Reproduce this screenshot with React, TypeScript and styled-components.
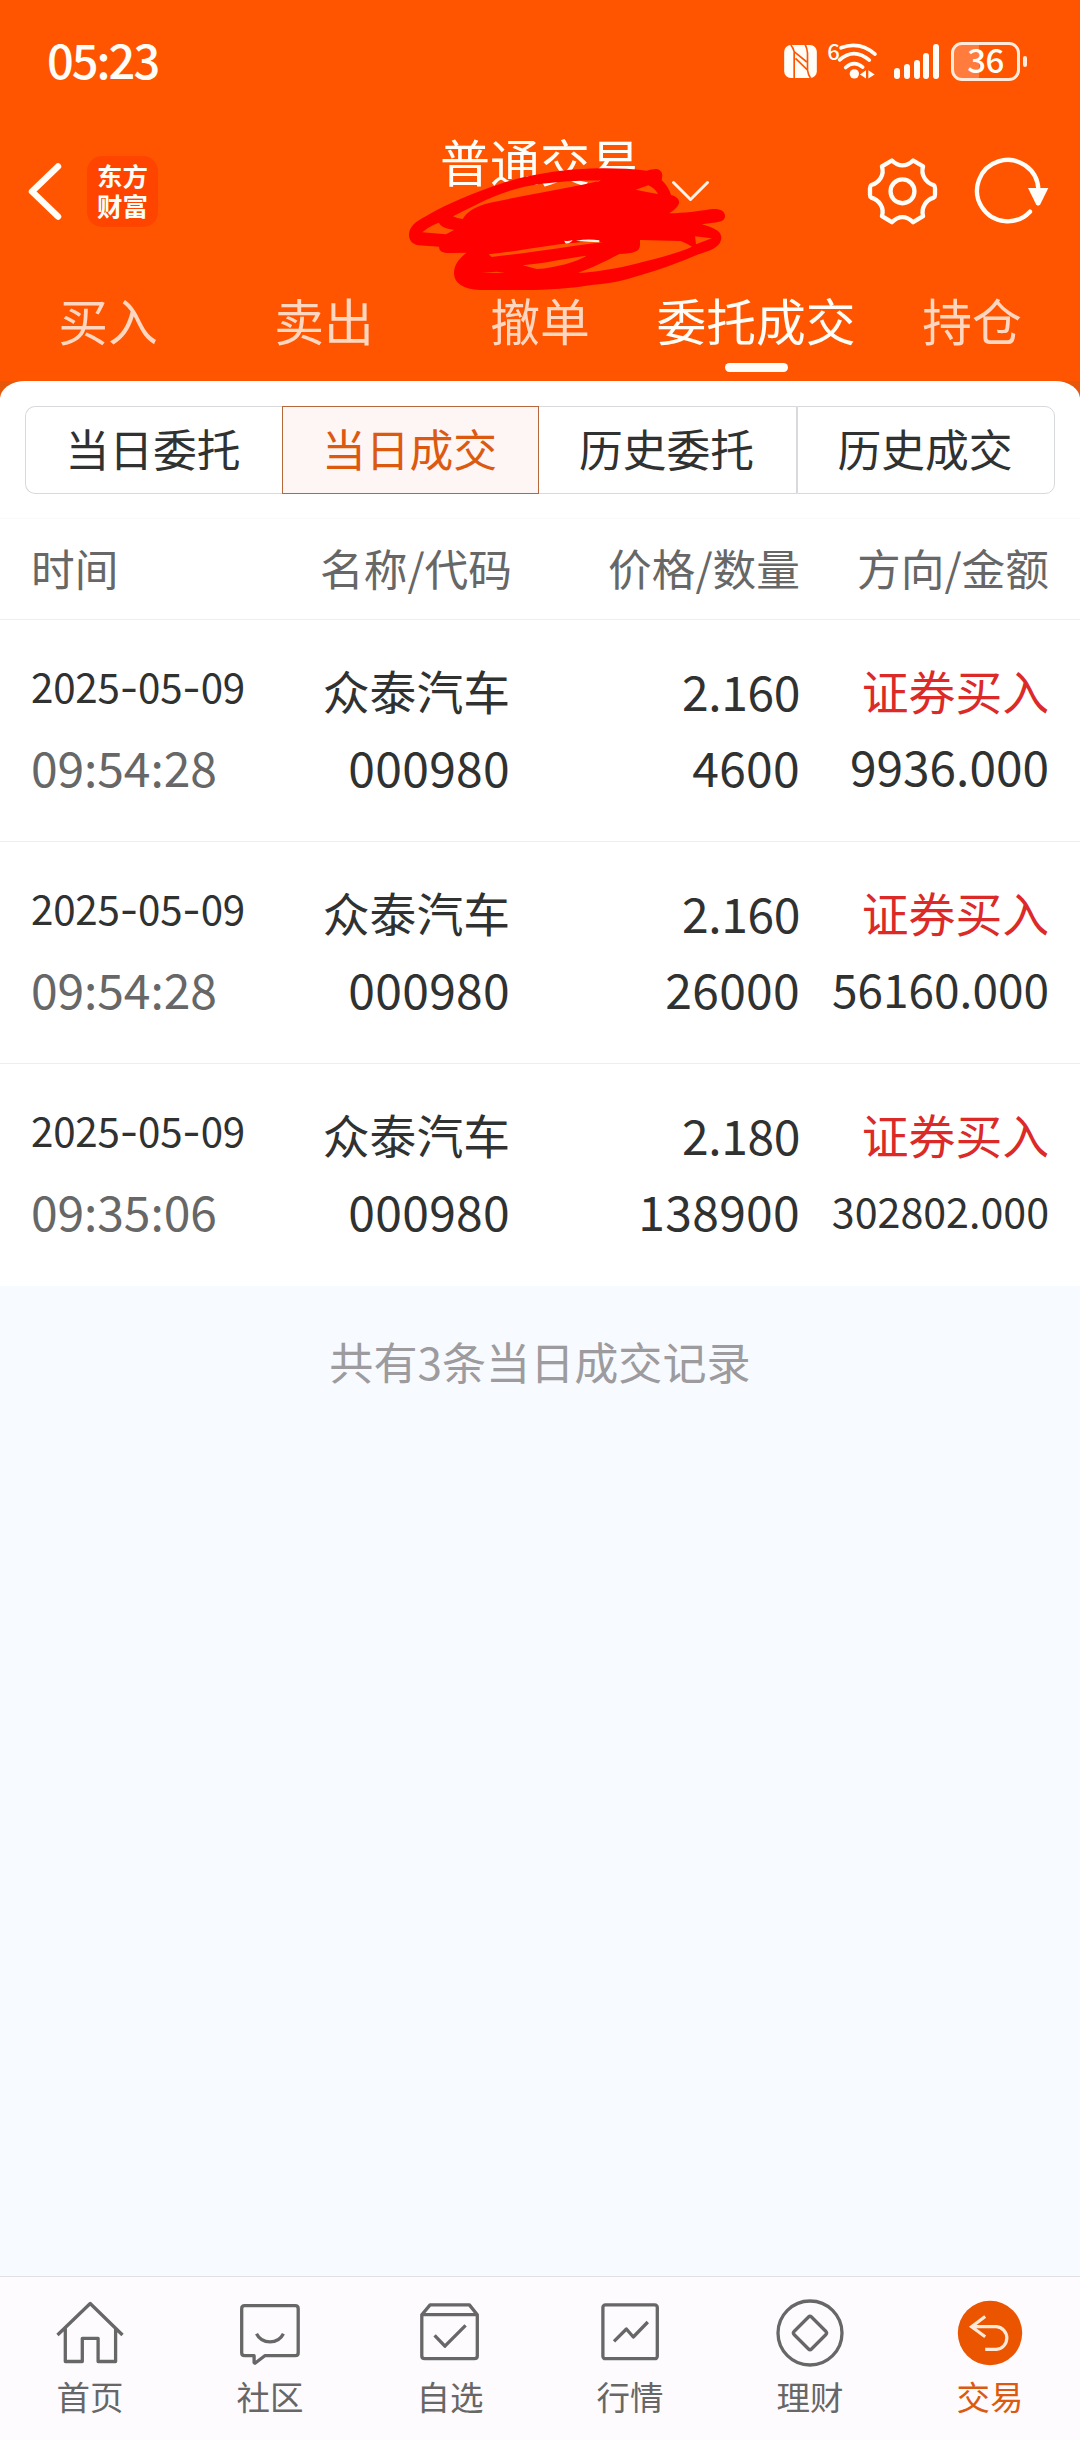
import React from 'react';
import styled, { createGlobalStyle } from 'styled-components';

const GlobalStyle = createGlobalStyle`
  *, *::before, *::after { box-sizing: border-box; }
  html, body { margin: 0; padding: 0; background: #f7faff; }
  body { font-family: 'Noto Sans CJK SC', 'Noto Sans', sans-serif; color: #303131; }
  svg { display: block; flex: none; overflow: visible; }
`;

const Screen = styled.div`
  width: 1080px;
  height: 2440px;
  display: flex;
  flex-direction: column;
  background: #f7faff;
`;

const Header = styled.header`
  position: relative;
  height: 381px;
  background: #ff5500;
  color: #fffdf8;
`;

const StatusBar = styled.div`
  display: flex;
  align-items: center;
  justify-content: space-between;
  height: 122px;
  padding: 0 53px 0 47px;
`;

const Clock = styled.div`
  font-size: 47px;
  font-weight: 500;
  line-height: 60px;
  letter-spacing: -2px;
  padding-bottom: 5px;
`;

const StatusIcons = styled.div`
  display: flex;
  align-items: center;
`;

const WifiGroup = styled.div`
  display: flex;
  align-items: flex-start;
  margin-left: 10px;
`;

const WifiGen = styled.span`
  width: 11px;
  font-size: 22px;
  font-weight: 500;
  line-height: 20px;
  margin-top: -3px;
`;

const SignalBars = styled.div`
  display: flex;
  align-items: flex-end;
  gap: 3.7px;
  height: 36px;
  margin: 0 12px 0 17px;
`;

const Bar = styled.i<{ $h: number }>`
  width: 6px;
  height: ${(p) => p.$h}px;
  border-radius: 3px;
  background: #fffdf8;
`;

const Battery = styled.div`
  display: flex;
  align-items: center;
  justify-content: center;
  width: 69px;
  height: 39px;
  border: 3px solid #ffeadb;
  border-radius: 11px;
  background: linear-gradient(to right, #ff7c3c 25px, transparent 25px);
  font-size: 33px;
  font-weight: 500;
  line-height: 33px;
  letter-spacing: -0.6px;
  padding-bottom: 4px;
`;

const BatteryTip = styled.i`
  width: 4px;
  height: 11px;
  margin-left: 3px;
  border-radius: 2px;
  background: #ffeadb;
`;

const NavRow = styled.div`
  display: grid;
  grid-template-columns: 440px 200px 440px;
  height: 138px;
`;

const NavLeft = styled.div`
  display: flex;
  align-items: center;
  gap: 26px;
  padding-left: 28px;
`;

const Logo = styled.div`
  width: 71px;
  height: 71px;
  padding: 4px 9px 0 10px;
  border-radius: 15px;
  background: #ff4400;
  font-size: 25.5px;
  font-weight: 700;
  line-height: 30px;
  word-break: break-all;
`;

const Title = styled.h1`
  margin: 8px 0 0;
  font-size: 50px;
  font-weight: 400;
  line-height: 60px;
  white-space: nowrap;
`;

const NavRight = styled.div`
  display: flex;
  align-items: center;
  padding: 0 32px 0 32px;
`;

const NavActions = styled.div`
  display: flex;
  align-items: center;
  gap: 38px;
  margin-left: auto;
`;

const Scribble = styled.svg`
  position: absolute;
  left: 390px;
  top: 120px;
  width: 350px;
  height: 180px;
`;

const Tabs = styled.nav`
  display: grid;
  grid-template-columns: repeat(5, 216px);
  height: 121px;
  padding-top: 29px;
`;

const Tab = styled.div<{ $active?: boolean }>`
  display: flex;
  flex-direction: column;
  align-items: center;
  gap: 14px;
  font-size: 49.8px;
  line-height: 60px;
  white-space: nowrap;
  color: ${(p) => (p.$active ? '#fffdf8' : '#ffd6bf')};

  &::after {
    content: '';
    width: 63px;
    height: 9px;
    border-radius: 5px;
    background: ${(p) => (p.$active ? '#fffdf8' : 'transparent')};
  }
`;

const PanelBack = styled.div`
  background: linear-gradient(#e6570c 16px, #fff 16px);
`;

const Panel = styled.main`
  background: #fff;
  border-radius: 25px 25px 0 0 / 18px 18px 0 0;
  padding-top: 25px;
`;

const Segments = styled.div`
  display: grid;
  grid-template-columns: 257px 257px 258px 258px;
  height: 88px;
  margin: 0 25px 24px;
`;

const Segment = styled.div<{ $active?: boolean }>`
  display: flex;
  align-items: center;
  justify-content: center;
  padding: 0 2px 4px 0;
  font-size: 43.8px;
  color: ${(p) => (p.$active ? '#dc5a10' : '#303131')};
  background: ${(p) => (p.$active ? '#fef5f5' : '#fff')};
  border: 1px solid ${(p) => (p.$active ? '#b4683c' : '#d8d9dc')};

  &:first-child { border-radius: 10px 0 0 10px; border-right: 0; }
  &:nth-child(3) { border-left: 0; }
  &:last-child { border-radius: 0 10px 10px 0; }
`;

const Row = styled.div`
  display: grid;
  grid-template-columns: 228px 250px 290px 249px;
  padding: 0 31px 0 32px;
`;

const HeadRow = styled(Row)`
  height: 102px;
  align-items: center;
  border-top: 1px solid #fafafa;
  border-bottom: 1px solid #eeeeee;
  padding-bottom: 5px;
  font-size: 43.7px;
  color: #666766;
`;

const HeadCell = styled.div<{ $left?: boolean; $shift?: number }>`
  text-align: ${(p) => (p.$left ? 'left' : 'right')};
  margin-right: ${(p) => -(p.$shift ?? 0)}px;
  margin-left: ${(p) => (p.$left ? -1 : 0)}px;
  white-space: nowrap;
`;

const TradeRow = styled(Row)`
  height: 222px;
  padding-top: 32px;
  border-bottom: 1px solid #eeeeee;

  &:last-child { border-bottom-color: #fff; }
`;

const TimeCell = styled.div`
  display: flex;
  flex-direction: column;
  margin-left: -1px;
  white-space: nowrap;
`;

const DateText = styled.div`
  height: 76px;
  font-size: 40.3px;
  line-height: 67px;
  letter-spacing: -0.2px;
`;

const Dash = styled.span`
  font-family: Inter, sans-serif;
  line-height: 1;
`;

const TimeText = styled.div`
  font-size: 48px;
  line-height: 76px;
  letter-spacing: -0.1px;
  color: #666766;
`;

const ValueCell = styled.div`
  text-align: right;
  white-space: nowrap;
`;

const Value = styled.div<{ $size?: number; $color?: string; $track?: number }>`
  height: 76px;
  line-height: 76px;
  font-size: ${(p) => p.$size ?? 48}px;
  color: ${(p) => p.$color ?? 'inherit'};
  letter-spacing: ${(p) => p.$track ?? 0}px;
`;

const Summary = styled.p`
  flex: 1;
  margin: 0;
  padding-top: 43px;
  text-align: center;
  font-size: 44.1px;
  line-height: 64px;
  color: #9d9b9d;
`;

const BottomNav = styled.nav`
  display: grid;
  grid-template-columns: repeat(6, 180px);
  height: 164px;
  padding-top: 19px;
  background: #fefbff;
  border-top: 1px solid #dfe1e5;
`;

const NavItem = styled.div<{ $active?: boolean }>`
  display: flex;
  flex-direction: column;
  align-items: center;
  font-size: 33.5px;
  line-height: 40px;
  color: ${(p) => (p.$active ? '#dc5a10' : '#666766')};

  svg { margin-bottom: 8px; }
`;

const NfcIcon = () => (
  <svg width="33" height="33" viewBox="133 72 98 99" fill="none" stroke="#ff5500" strokeWidth="5">
    <rect x="133" y="72" width="98" height="99" rx="20" fill="#fffdf8" stroke="none" />
    <path d="M163 172 V92 L201 123 M153 72 Q160 80 163 92" />
    <path d="M167 112 L203 147 V96 Q202 82 196 71 M203 147 Q205 162 212 171" />
  </svg>
);

const WifiIcon = () => (
  <svg width="39" height="36" viewBox="294 68 117 107" fill="none" stroke="#fffdf8" strokeWidth="11" strokeLinecap="round">
    <path d="M303 82 Q359 61 405 101" />
    <path d="M299 118 Q342 80 388 119" />
    <path d="M317 141 Q342 118 368 140" />
    <circle cx="343" cy="160" r="14" fill="#fffdf8" stroke="none" />
    <path d="M378 149 V174 L360 162Z M385 149 V174 L404 162Z" fill="#fffdf8" stroke="none" />
  </svg>
);

const BackIcon = () => (
  <svg width="33" height="57" viewBox="0 0 33 57" fill="none" stroke="#fffdf8" strokeWidth="6.5" strokeLinecap="round" strokeLinejoin="round">
    <path d="M30 3.5 L4 28.5 L30 53.5" />
  </svg>
);

const ChevronIcon = () => (
  <svg width="37" height="20" viewBox="0 0 37 20" fill="none" stroke="#fff1e6" strokeWidth="3" strokeLinecap="round" strokeLinejoin="round">
    <path d="M1.5 1.5 L18.5 18.5 L35.5 1.5" />
  </svg>
);

const GearIcon = () => (
  <svg width="69" height="67" viewBox="385 411 208 201" fill="none" stroke="#fffdf8" strokeWidth="13" strokeLinejoin="round">
    <path d="M457 418 Q473 433 489 433 Q505 433 521 418 L551 436 Q545 456 556 472 Q566 488 583 492 Q587 495 587 502 V521 Q587 528 583 530 Q564 536 556 551 Q546 567 551 586 L521 604 Q505 589 489 589 Q473 589 457 604 L427 586 Q433 567 423 551 Q413 535 395 530 Q391 528 391 521 V502 Q391 495 395 492 Q413 487 423 471 Q433 456 427 436 Z" />
    <circle cx="489" cy="511" r="36" />
  </svg>
);

const RefreshIcon = () => (
  <svg width="73" height="66" viewBox="707 415 219 198" fill="none" stroke="#fffdf8" strokeWidth="13">
    <path d="M897 508 A92 92 0 1 0 872 576" strokeLinecap="round" />
    <path d="M866 505 H927 L903 554 Q896 562 890 554Z" fill="#fffdf8" stroke="none" />
  </svg>
);

const ScribbleMark = () => (
  <Scribble viewBox="0 0 1050 540">
    <path
      fill="#ff0000"
      fillRule="evenodd"
      d="M57 345 C57 320 75 305 110 287 C170 252 260 215 330 192 C400 168 480 155 560 148 C620 143 700 143 770 152 C785 148 800 144 808 150 C820 158 817 170 815 180 C830 195 840 212 843 225 C862 230 869 240 867 250 C862 265 845 275 838 280 C880 280 930 273 960 268 C985 264 1005 270 1005 288 C1005 303 990 306 970 308 L935 313 C965 322 993 330 994 352 C994 385 950 395 920 405 C860 430 820 445 780 457 C720 475 680 490 610 494 C540 505 480 510 400 510 L270 510 C220 508 192 490 192 460 C192 430 212 412 230 398 L185 399 C160 400 147 395 147 380 L85 376 C65 372 57 360 57 345Z
      M189 289 C250 258 330 213 420 197 C480 187 560 180 632 182 C560 198 480 212 400 228 L300 248 C260 258 232 272 218 297 Q200 295 189 289Z
      M97 337 C110 325 130 313 147 308 C152 320 165 324 192 330 Q180 336 168 343Z
      M737 209 L775 196 Q796 206 804 222 Q770 216 737 209Z
      M750 360 L872 363 Q890 370 906 380 C860 400 800 417 700 440 C650 450 600 458 565 458 C600 445 640 428 688 402 C730 400 750 396 750 375Z
      M296 403 C400 392 500 368 600 365 L640 367 C560 375 450 395 305 411Z
      M398 436 C470 428 530 415 590 407 C560 425 500 443 440 447Z
      M275 458 L320 455 L345 459Z
      M915 349 L965 355 L918 373Z"
    />
    <path d="M523 362 Q536 364 548 360 Q540 372 526 370Z M558 362 Q595 355 628 361 V367 Q590 365 570 364Z" fill="#fff3e8" />
  </Scribble>
);

const LineIcon = ({ children }: { children: React.ReactNode }) => (
  <svg width="72" height="72" viewBox="0 0 72 72" fill="none" stroke="#666766" strokeWidth="3.3" strokeLinejoin="round">
    {children}
  </svg>
);

const navItems = [
  {
    label: '首页',
    icon: (
      <LineIcon>
        <path d="M3.5 39 L36.2 7.5 L68.5 39 M11.3 32 V65.5 H28.3 V42.3 H44.1 V65.5 H61.6 V32" />
      </LineIcon>
    ),
  },
  {
    label: '社区',
    icon: (
      <LineIcon>
        <path d="M10.7 9.7 H61.2 Q64.2 9.7 64.2 12.7 V56.7 Q64.2 59.7 61.2 59.7 H30.8 L21 67.3 L20.1 66.5 V59.7 H10.7 Q7.7 59.7 7.7 56.7 V12.7 Q7.7 9.7 10.7 9.7Z" />
        <path d="M22.5 37.7 C28 48.5 44 48.5 49.4 37.7" />
      </LineIcon>
    ),
  },
  {
    label: '自选',
    icon: (
      <LineIcon>
        <path d="M16.1 8.9 H55.4 L63.3 18.7 V60 Q63.3 62.7 60.3 62.7 H10.8 Q7.8 62.7 7.8 60 V18.7Z M7.8 18.7 H63.3" />
        <path d="M20.6 39.3 L30.9 50.2 L51.6 29.3" />
      </LineIcon>
    ),
  },
  {
    label: '行情',
    icon: (
      <LineIcon>
        <rect x="8.9" y="8.9" width="54.4" height="53.8" rx="2.5" />
        <path d="M20 45.3 L32.4 33 L39.3 41 L53.8 26" />
      </LineIcon>
    ),
  },
  {
    label: '理财',
    icon: (
      <LineIcon>
        <circle cx="36" cy="37" r="32" />
        <path d="M34.5 21 Q36 19.5 37.5 21 L52 35.5 Q53.3 37 52 38.5 L37.5 53 Q36 54.5 34.5 53 L20 38.5 Q18.7 37 20 35.5Z" />
      </LineIcon>
    ),
  },
  {
    label: '交易',
    active: true,
    icon: (
      <svg width="72" height="72" viewBox="0 0 72 72" fill="none" stroke="#ffe9d6" strokeWidth="3.2">
        <circle cx="36" cy="37" r="32.2" fill="#eb5500" stroke="none" />
        <path d="M31.2 20.5 L17.6 30.7 L31.2 40.7 M17.6 30.7 H42.5 A11.4 11.4 0 0 1 42.5 53.4 H31.2" />
      </svg>
    ),
  },
];

const tabs = ['买入', '卖出', '撤单', '委托成交', '持仓'];
const segments = ['当日委托', '当日成交', '历史委托', '历史成交'];

const trades = [
  { time: '09:54:28', price: '2.160', qty: '4600', amount: '9936.000', size: 47.8 },
  { time: '09:54:28', price: '2.160', qty: '26000', amount: '56160.000', size: 46 },
  { time: '09:35:06', price: '2.180', qty: '138900', amount: '302802.000', size: 41.2 },
];

export default function App() {
  return (
    <Screen>
      <GlobalStyle />
      <Header>
        <StatusBar>
          <Clock>05:23</Clock>
          <StatusIcons>
            <NfcIcon />
            <WifiGroup>
              <WifiGen>6</WifiGen>
              <WifiIcon />
            </WifiGroup>
            <SignalBars>
              {[11, 15, 19, 26, 35].map((h) => (
                <Bar key={h} $h={h} />
              ))}
            </SignalBars>
            <Battery>36</Battery>
            <BatteryTip />
          </StatusIcons>
        </StatusBar>
        <NavRow>
          <NavLeft>
            <BackIcon />
            <Logo>东方财富</Logo>
          </NavLeft>
          <Title>普通交易</Title>
          <NavRight>
            <ChevronIcon />
            <NavActions>
              <GearIcon />
              <RefreshIcon />
            </NavActions>
          </NavRight>
        </NavRow>
        <Tabs>
          {tabs.map((t) => (
            <Tab key={t} $active={t === '委托成交'}>
              {t}
            </Tab>
          ))}
        </Tabs>
        <ScribbleMark />
      </Header>
      <PanelBack>
        <Panel>
          <Segments>
            {segments.map((s) => (
              <Segment key={s} $active={s === '当日成交'}>
                {s}
              </Segment>
            ))}
          </Segments>
          <HeadRow>
            <HeadCell $left>时间</HeadCell>
            <HeadCell $shift={2}>名称/代码</HeadCell>
            <HeadCell>价格/数量</HeadCell>
            <HeadCell>方向/金额</HeadCell>
          </HeadRow>
          {trades.map((t) => (
            <TradeRow key={t.amount}>
              <TimeCell>
                <DateText>
                  2025<Dash>-</Dash>05<Dash>-</Dash>09
                </DateText>
                <TimeText>{t.time}</TimeText>
              </TimeCell>
              <ValueCell>
                <Value $size={46.8}>众泰汽车</Value>
                <Value $track={0.3}>000980</Value>
              </ValueCell>
              <ValueCell>
                <Value $track={-0.4}>{t.price}</Value>
                <Value $track={0.3}>{t.qty}</Value>
              </ValueCell>
              <ValueCell>
                <Value $size={46.8} $color="#dc2a28">
                  证券买入
                </Value>
                <Value $size={t.size}>{t.amount}</Value>
              </ValueCell>
            </TradeRow>
          ))}
        </Panel>
      </PanelBack>
      <Summary>共有3条当日成交记录</Summary>
      <BottomNav>
        {navItems.map((n) => (
          <NavItem key={n.label} $active={n.active}>
            {n.icon}
            {n.label}
          </NavItem>
        ))}
      </BottomNav>
    </Screen>
  );
}
